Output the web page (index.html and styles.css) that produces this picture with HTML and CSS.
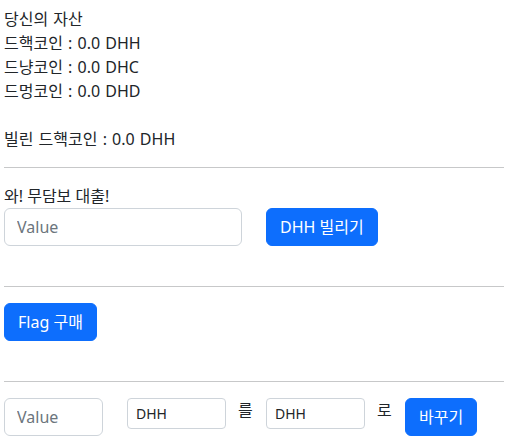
FILE: index.html
```html
<!DOCTYPE html>
<html lang="ko">
<head>
<meta charset="utf-8">
<link rel="stylesheet" href="styles.css">
</head>
<body>
<div class="wrap">
  <div class="assets">
    <div>당신의 자산</div>
    <div>드핵코인 : 0.0 DHH</div>
    <div>드냥코인 : 0.0 DHC</div>
    <div>드멍코인 : 0.0 DHD</div>
    <div class="blank"></div>
    <div>빌린 드핵코인 : 0.0 DHH</div>
  </div>
  <hr class="rule">
  <div class="loan">
    <div class="label">와! 무담보 대출!</div>
    <div class="loan-row">
      <input class="field field-wide" type="text" placeholder="Value">
      <button class="btn">DHH 빌리기</button>
    </div>
  </div>
  <hr class="rule">
  <div class="flag">
    <button class="btn">Flag 구매</button>
  </div>
  <hr class="rule">
  <div class="swap-row">
    <input class="field field-value" type="text" placeholder="Value">
    <input class="field field-sm" type="text" value="DHH">
    <span class="word">를</span>
    <input class="field field-sm" type="text" value="DHH">
    <span class="word">로</span>
    <button class="btn">바꾸기</button>
  </div>
</div>
</body>
</html>
```

FILE: styles.css
```css
* { box-sizing: border-box; }
html, body { margin: 0; padding: 0; background: #fff; }
body {
  font-family: "Noto Sans", "Noto Sans CJK KR", sans-serif;
  font-size: 16px;
  line-height: 24px;
  color: #212529;
}
.wrap {
  width: 500px;
  margin-left: 4px;
  padding-top: 7px;
}
.assets { word-spacing: 1px; }
.blank { height: 24px; }
.rule {
  border: 0;
  border-top: 1px solid #212529;
  opacity: 0.25;
  margin: 16px 0;
  height: 0;
}
.loan { padding-bottom: 24px; }
.loan-row {
  display: flex;
  align-items: flex-start;
  gap: 24px;
}
.flag { padding-bottom: 24px; }
.field {
  font-family: inherit;
  font-size: 16px;
  line-height: 24px;
  height: 38px;
  padding: 6px 12px;
  border: 1px solid #ced4da;
  border-radius: 6px;
  color: #212529;
  background: #fff;
  outline: none;
}
.field::placeholder { color: #6c757d; }
.field-wide { width: 238px; }
.field-value { width: 99px; margin-right: 24px; }
.field-sm {
  width: 99px;
  height: 31px;
  font-size: 14px;
  line-height: 21px;
  padding: 4px 8px;
  border-radius: 4px;
}
.swap-row {
  display: flex;
  align-items: flex-start;
}
.word {
  width: 16px;
  margin: 0 12px;
  line-height: 24px;
}
.btn {
  font-family: inherit;
  font-size: 16px;
  line-height: 24px;
  height: 38px;
  padding: 6px 13px;
  border: 1px solid #0d6efd;
  border-radius: 6px;
  background: #0d6efd;
  color: #fff;
  cursor: pointer;
}
```
